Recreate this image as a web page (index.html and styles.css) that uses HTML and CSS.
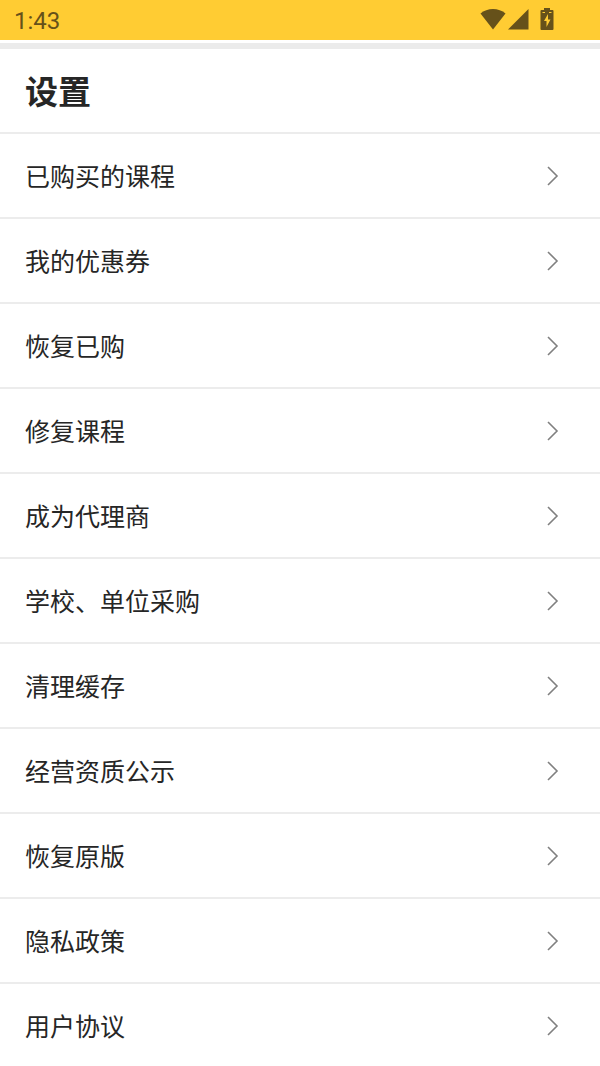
FILE: index.html
```html
<!DOCTYPE html>
<html lang="zh-CN">
<head>
<meta charset="utf-8">
<meta name="viewport" content="width=device-width, initial-scale=1">
<title>设置</title>
<link rel="stylesheet" href="styles.css">
</head>
<body>
<header class="status">
  <time class="clock">1:43</time>
  <div class="status-icons">
    <svg class="wifi" viewBox="0 0 26 22" aria-hidden="true"><path d="M.5 5.500C7-.5 19-.5 25.500 5.500L13 21.500Z"/></svg>
    <svg class="signal" viewBox="0 0 22 22" aria-hidden="true"><path d="M21.500 1V21.500H1Z"/></svg>
    <svg class="battery" viewBox="0 0 14 22" aria-hidden="true"><path fill-rule="evenodd" d="M4 0H10V2H12.500Q13.500 2 13.500 3V21Q13.500 22 12.500 22H1.500Q.5 22 .5 21V3Q.5 2 1.500 2H4ZM2.500 4V5H5V4ZM9 4V5H11.500V4ZM8 6L4 13H6.500V19L10.500 11.500H8Z"/></svg>
  </div>
</header>
<main class="page">
  <h1 class="title">设置</h1>
  <nav class="menu" id="menu" aria-label="设置">
    <a class="row" href="#menu"><span class="label">已购买的课程</span><svg class="chevron" viewBox="0 0 12 20" aria-hidden="true"><path d="M1 1L10 10L1 19"/></svg></a>
    <a class="row" href="#menu"><span class="label">我的优惠券</span><svg class="chevron" viewBox="0 0 12 20" aria-hidden="true"><path d="M1 1L10 10L1 19"/></svg></a>
    <a class="row" href="#menu"><span class="label">恢复已购</span><svg class="chevron" viewBox="0 0 12 20" aria-hidden="true"><path d="M1 1L10 10L1 19"/></svg></a>
    <a class="row" href="#menu"><span class="label">修复课程</span><svg class="chevron" viewBox="0 0 12 20" aria-hidden="true"><path d="M1 1L10 10L1 19"/></svg></a>
    <a class="row" href="#menu"><span class="label">成为代理商</span><svg class="chevron" viewBox="0 0 12 20" aria-hidden="true"><path d="M1 1L10 10L1 19"/></svg></a>
    <a class="row" href="#menu"><span class="label">学校、单位采购</span><svg class="chevron" viewBox="0 0 12 20" aria-hidden="true"><path d="M1 1L10 10L1 19"/></svg></a>
    <a class="row" href="#menu"><span class="label">清理缓存</span><svg class="chevron" viewBox="0 0 12 20" aria-hidden="true"><path d="M1 1L10 10L1 19"/></svg></a>
    <a class="row" href="#menu"><span class="label">经营资质公示</span><svg class="chevron" viewBox="0 0 12 20" aria-hidden="true"><path d="M1 1L10 10L1 19"/></svg></a>
    <a class="row" href="#menu"><span class="label">恢复原版</span><svg class="chevron" viewBox="0 0 12 20" aria-hidden="true"><path d="M1 1L10 10L1 19"/></svg></a>
    <a class="row" href="#menu"><span class="label">隐私政策</span><svg class="chevron" viewBox="0 0 12 20" aria-hidden="true"><path d="M1 1L10 10L1 19"/></svg></a>
    <a class="row" href="#menu"><span class="label">用户协议</span><svg class="chevron" viewBox="0 0 12 20" aria-hidden="true"><path d="M1 1L10 10L1 19"/></svg></a>
  </nav>
</main>
</body>
</html>
```
FILE: styles.css
```css
* { box-sizing: border-box; }
body {
  margin: 0;
  background: #fff;
  color: #262626;
  font-family: "Noto Sans CJK SC", sans-serif;
}
.status {
  display: flex;
  align-items: center;
  justify-content: space-between;
  height: 40px;
  padding: 0 46px 0 14px;
  background: #ffcc33;
  color: #66511a;
}
.clock { padding-top: 2px; font: 400 24px/38px Roboto, sans-serif; }
.status-icons { display: flex; align-items: center; padding-bottom: 2px; fill: currentColor; }
.wifi { width: 26px; height: 22px; }
.signal { width: 22px; height: 22px; margin-left: 1px; }
.battery { width: 14px; height: 22px; margin-left: 11px; }
.page { margin-top: 3px; border-top: 6px solid #ebebeb; }
.title {
  margin: 0;
  padding: 0 25px 1px;
  font-size: 33px;
  font-weight: 700;
  line-height: 82px;
}
.row {
  display: flex;
  align-items: center;
  justify-content: space-between;
  height: 85px;
  padding: 0 41px 0 25px;
  border-top: 2px solid #ececec;
  color: inherit;
  font-size: 25px;
  text-decoration: none;
}
.label { padding-bottom: 2px; }
.chevron {
  width: 12px;
  height: 20px;
  fill: none;
  stroke: #808080;
  stroke-width: 1.6;
}
```
